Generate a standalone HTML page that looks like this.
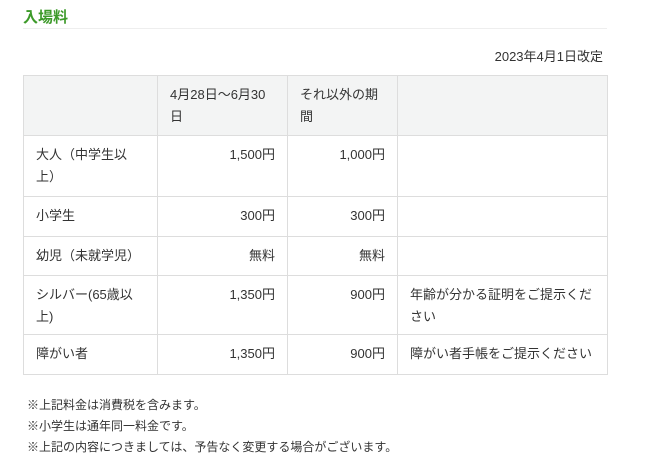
<html><head><style>
body{margin:0;background:#fff;font-family:"Liberation Sans","Noto Sans CJK JP",sans-serif;color:#333;font-size:13px;}
h2{position:absolute;left:23px;top:6px;margin:0;font-size:15px;color:#3d9a2a;font-weight:bold;}
.hr{position:absolute;left:23px;top:28px;width:584px;border-top:1px solid #eee;}
.date{position:absolute;right:47px;top:46px;font-size:13px;}
table{position:absolute;left:23px;top:75px;border-collapse:collapse;width:584px;table-layout:fixed;}
td{border:1px solid #ddd;padding:8px 12px 6px;line-height:22px;vertical-align:top;font-size:13px;}
tr.h td{background:#f3f4f4;}
.r{text-align:right;}
.notes{position:absolute;left:27px;top:395px;font-size:12px;line-height:21px;}
</style></head><body>
<h2>入場料</h2><div class="hr"></div>
<div class="date">2023年4月1日改定</div>
<table>
<colgroup><col style="width:134px"><col style="width:130px"><col style="width:110px"><col style="width:210px"></colgroup>
<tr class="h" style="height:60px"><td></td><td>4月28日～6月30日</td><td>それ以外の期間</td><td></td></tr>
<tr style="height:61px"><td>大人（中学生以上）</td><td class="r">1,500円</td><td class="r">1,000円</td><td></td></tr>
<tr style="height:40px"><td>小学生</td><td class="r">300円</td><td class="r">300円</td><td></td></tr>
<tr style="height:39px"><td>幼児（未就学児）</td><td class="r">無料</td><td class="r">無料</td><td></td></tr>
<tr style="height:59px"><td>シルバー(65歳以上)</td><td class="r">1,350円</td><td class="r">900円</td><td>年齢が分かる証明をご提示ください</td></tr>
<tr style="height:40px"><td>障がい者</td><td class="r">1,350円</td><td class="r">900円</td><td>障がい者手帳をご提示ください</td></tr>
</table>
<div class="notes">※上記料金は消費税を含みます。<br>※小学生は通年同一料金です。<br>※上記の内容につきましては、予告なく変更する場合がございます。</div>
</body></html>
